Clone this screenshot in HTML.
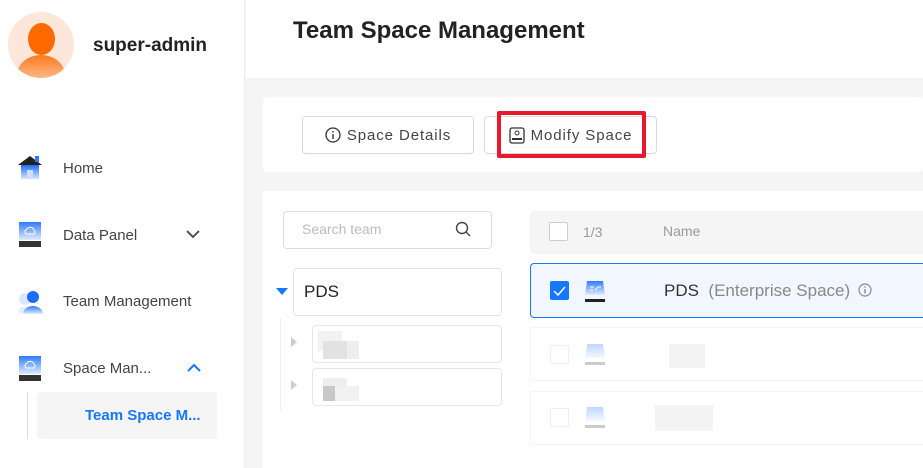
<!DOCTYPE html>
<html><head><style>
*{box-sizing:border-box;margin:0;padding:0}
body{width:923px;height:468px;overflow:hidden;position:relative;background:#f5f5f5;font-family:"Liberation Sans",sans-serif}
.a{position:absolute}
.side{left:0;top:0;width:245px;height:468px;background:#fff;border-right:1px solid #eee}
.nav{font-size:15px;color:#444}
.btn{border:1px solid #d9d9d9;border-radius:4px;background:#fff;font-size:15px;color:#444;letter-spacing:.9px;display:flex;align-items:center;justify-content:center;gap:6px}
.box{border:1px solid #e6e6e6;border-radius:4px;background:#fff}
.blur{background:#ececec}
</style></head><body>
<div class="a side"></div>
<div class="a" style="left:8px;top:12px;width:66px;height:66px;border-radius:50%;background:#fde6da;overflow:hidden">
 <div class="a" style="left:20px;top:11px;width:27px;height:32px;border-radius:50%;background:#ff6a00"></div>
 <div class="a" style="left:9px;top:43px;width:48px;height:40px;border-radius:50%;background:linear-gradient(#ff7a1a,#fde6da)"></div>
</div>
<div class="a" style="left:93px;top:35px;font-size:19px;font-weight:bold;color:#222">super-admin</div>

<svg class="a" style="left:18px;top:154px" width="24" height="26"><polygon points="12,2 0,11 24,11" fill="#222"/><rect x="17" y="2" width="4" height="6" fill="#2e7bff"/><rect x="3" y="11" width="18" height="14" fill="url(#g1)"/><rect x="9" y="16" width="6" height="8" fill="#cfe0ff"/><defs><linearGradient id="g1" x1="0" y1="0" x2="0" y2="1"><stop offset="0" stop-color="#1e6bff"/><stop offset="1" stop-color="#d6e6ff"/></linearGradient><linearGradient id="g2" x1="0" y1="0" x2="0" y2="1"><stop offset="0" stop-color="#2e7bff"/><stop offset="1" stop-color="#e0ecff"/></linearGradient></defs></svg>
<div class="a nav" style="left:63px;top:160px">Home</div>

<svg class="a" style="left:18px;top:221px" width="24" height="28"><rect x="1" y="1" width="22" height="18" fill="url(#g2)"/><path d="M8 13a3 3 0 0 1 1-5a4 4 0 0 1 7 1a2.5 2.5 0 0 1 0 4z" fill="none" stroke="#fff" stroke-width="1"/><rect x="1" y="20" width="22" height="6" fill="#333"/></svg>
<div class="a nav" style="left:63px;top:227px">Data Panel</div>
<svg class="a" style="left:185px;top:228px" width="16" height="12"><path d="M2 3l6 6 6-6" fill="none" stroke="#555" stroke-width="2"/></svg>

<svg class="a" style="left:17px;top:289px" width="28" height="26"><circle cx="8" cy="10" r="6" fill="#dce8ff"/><path d="M1 24a8 6 0 0 1 12-6v6z" fill="#e6efff"/><circle cx="16" cy="8" r="6" fill="#1e6bff"/><path d="M6 25a10 8 0 0 1 20 0z" fill="url(#g2)"/></svg>
<div class="a nav" style="left:63px;top:293px">Team Management</div>

<svg class="a" style="left:18px;top:355px" width="24" height="28"><rect x="1" y="1" width="22" height="18" fill="url(#g2)"/><path d="M8 13a3 3 0 0 1 1-5a4 4 0 0 1 7 1a2.5 2.5 0 0 1 0 4z" fill="none" stroke="#fff" stroke-width="1"/><rect x="1" y="20" width="22" height="6" fill="#333"/></svg>
<div class="a nav" style="left:63px;top:360px">Space Man...</div>
<svg class="a" style="left:186px;top:362px" width="16" height="12"><path d="M2 9l6-6 6 6" fill="none" stroke="#1677ff" stroke-width="2"/></svg>
<div class="a" style="left:27px;top:392px;width:1px;height:47px;background:#ddd"></div>
<div class="a" style="left:37px;top:392px;width:180px;height:47px;background:#f5f5f5;border-radius:4px"></div>
<div class="a" style="left:85px;top:407px;font-size:15px;font-weight:bold;color:#1677ff">Team Space M...</div>

<div class="a" style="left:246px;top:0;width:677px;height:78px;background:#fff"></div>
<div class="a" style="left:293px;top:17px;font-size:24px;font-weight:bold;color:#222">Team Space Management</div>

<div class="a" style="left:263px;top:97px;width:660px;height:75px;background:#fff;border-radius:4px"></div>
<div class="a btn" style="left:302px;top:116px;width:172px;height:38px"><svg width="16" height="16"><circle cx="8" cy="8" r="7" fill="none" stroke="#333" stroke-width="1.3"/><rect x="7.3" y="7" width="1.4" height="5" fill="#333"/><rect x="7.3" y="4" width="1.4" height="1.5" fill="#333"/></svg>Space Details</div>
<div class="a btn" style="left:484px;top:116px;width:173px;height:38px"><svg width="16" height="17"><rect x="1" y="1" width="14" height="15" rx="2" fill="none" stroke="#333" stroke-width="1.3"/><circle cx="8" cy="6" r="2" fill="none" stroke="#333"/><rect x="3" y="11" width="10" height="2" fill="#333"/></svg>Modify Space</div>
<div class="a" style="left:497px;top:111px;width:149px;height:47px;border:4px solid #e8192c;border-radius:2px"></div>

<div class="a" style="left:263px;top:191px;width:660px;height:277px;background:#fff"></div>
<div class="a box" style="left:283px;top:211px;width:209px;height:38px;border-color:#ddd"></div>
<div class="a" style="left:302px;top:221px;font-size:14px;color:#bbb">Search team</div>
<svg class="a" style="left:455px;top:221px" width="16" height="18"><circle cx="7" cy="7" r="5.5" fill="none" stroke="#444" stroke-width="1.4"/><path d="M11 11l4 4" stroke="#444" stroke-width="1.4"/></svg>
<svg class="a" style="left:275px;top:287px" width="14" height="10"><polygon points="1,1 13,1 7,8" fill="#1677ff"/></svg>
<div class="a box" style="left:293px;top:268px;width:209px;height:48px"></div>
<div class="a" style="left:304px;top:282px;font-size:17px;color:#222">PDS</div>
<div class="a" style="left:280px;top:318px;width:1px;height:93px;background:#eee"></div>
<svg class="a" style="left:288px;top:334px" width="10" height="16"><polygon points="3,3 9,8 3,13" fill="#ccc"/></svg>
<div class="a box" style="left:312px;top:325px;width:190px;height:38px"></div>
<div class="a" style="left:318px;top:331px;width:24px;height:20px;background:#f2f2f2"></div>
<div class="a" style="left:323px;top:341px;width:24px;height:18px;background:#e2e2e2"></div>
<div class="a" style="left:347px;top:341px;width:12px;height:18px;background:#eee"></div>
<svg class="a" style="left:288px;top:377px" width="10" height="16"><polygon points="3,3 9,8 3,13" fill="#ccc"/></svg>
<div class="a box" style="left:312px;top:368px;width:190px;height:38px"></div>
<div class="a" style="left:323px;top:378px;width:24px;height:10px;background:#eee"></div>
<div class="a" style="left:323px;top:386px;width:12px;height:15px;background:#c8c8c8"></div>
<div class="a" style="left:335px;top:386px;width:24px;height:15px;background:#f1f1f1"></div>

<div class="a" style="left:530px;top:211px;width:393px;height:43px;background:#f5f5f5;border-radius:4px 0 0 4px"></div>
<div class="a" style="left:549px;top:222px;width:19px;height:19px;border:1px solid #ccc;border-radius:2px;background:#fff"></div>
<div class="a" style="left:583px;top:224px;font-size:14px;color:#999">1/3</div>
<div class="a" style="left:663px;top:223px;font-size:14px;color:#999">Name</div>
<div class="a" style="left:530px;top:263px;width:393px;height:55px;background:#f2f7ff;border:1px solid #1677ff;border-right:none;border-radius:4px 0 0 4px"></div>
<div class="a" style="left:550px;top:281px;width:19px;height:19px;background:#1677ff;border-radius:2px"></div>
<svg class="a" style="left:550px;top:281px" width="19" height="19"><path d="M4 10l4 4 7-8" fill="none" stroke="#fff" stroke-width="1.5"/></svg>
<svg class="a" style="left:584px;top:280px" width="22" height="24"><path d="M3 1h16l2 14H1z" fill="url(#g2)"/><path d="M6 7h4M6 10h3M11 10l3-3h3" stroke="#fff" fill="none"/><rect x="1" y="19" width="20" height="3" fill="#222"/></svg>
<div class="a" style="left:664px;top:281px;font-size:17px;color:#333">PDS <span style="color:#888">&nbsp;(Enterprise Space)</span></div>
<svg class="a" style="left:858px;top:283px" width="14" height="14"><circle cx="7" cy="7" r="6" fill="none" stroke="#888" stroke-width="1.2"/><rect x="6.3" y="6" width="1.4" height="4.5" fill="#888"/><rect x="6.3" y="3.3" width="1.4" height="1.4" fill="#888"/></svg>
<div class="a" style="left:530px;top:327px;width:393px;height:54px;border:1px solid #f3f3f3;border-right:none"></div>
<div class="a" style="left:550px;top:345px;width:19px;height:19px;border:1px solid #eee;border-radius:2px"></div>
<svg class="a" style="left:584px;top:343px;opacity:.3" width="22" height="24"><path d="M3 1h16l2 14H1z" fill="url(#g2)"/><rect x="1" y="19" width="20" height="3" fill="#555"/></svg>
<div class="a" style="left:669px;top:344px;width:36px;height:24px;background:#f3f3f3"></div>
<div class="a" style="left:530px;top:391px;width:393px;height:54px;border:1px solid #f3f3f3;border-right:none"></div>
<div class="a" style="left:550px;top:408px;width:19px;height:19px;border:1px solid #eee;border-radius:2px"></div>
<svg class="a" style="left:584px;top:406px;opacity:.3" width="22" height="24"><path d="M3 1h16l2 14H1z" fill="url(#g2)"/><rect x="1" y="19" width="20" height="3" fill="#555"/></svg>
<div class="a" style="left:655px;top:405px;width:58px;height:26px;background:#f4f4f4"></div>
</body></html>
